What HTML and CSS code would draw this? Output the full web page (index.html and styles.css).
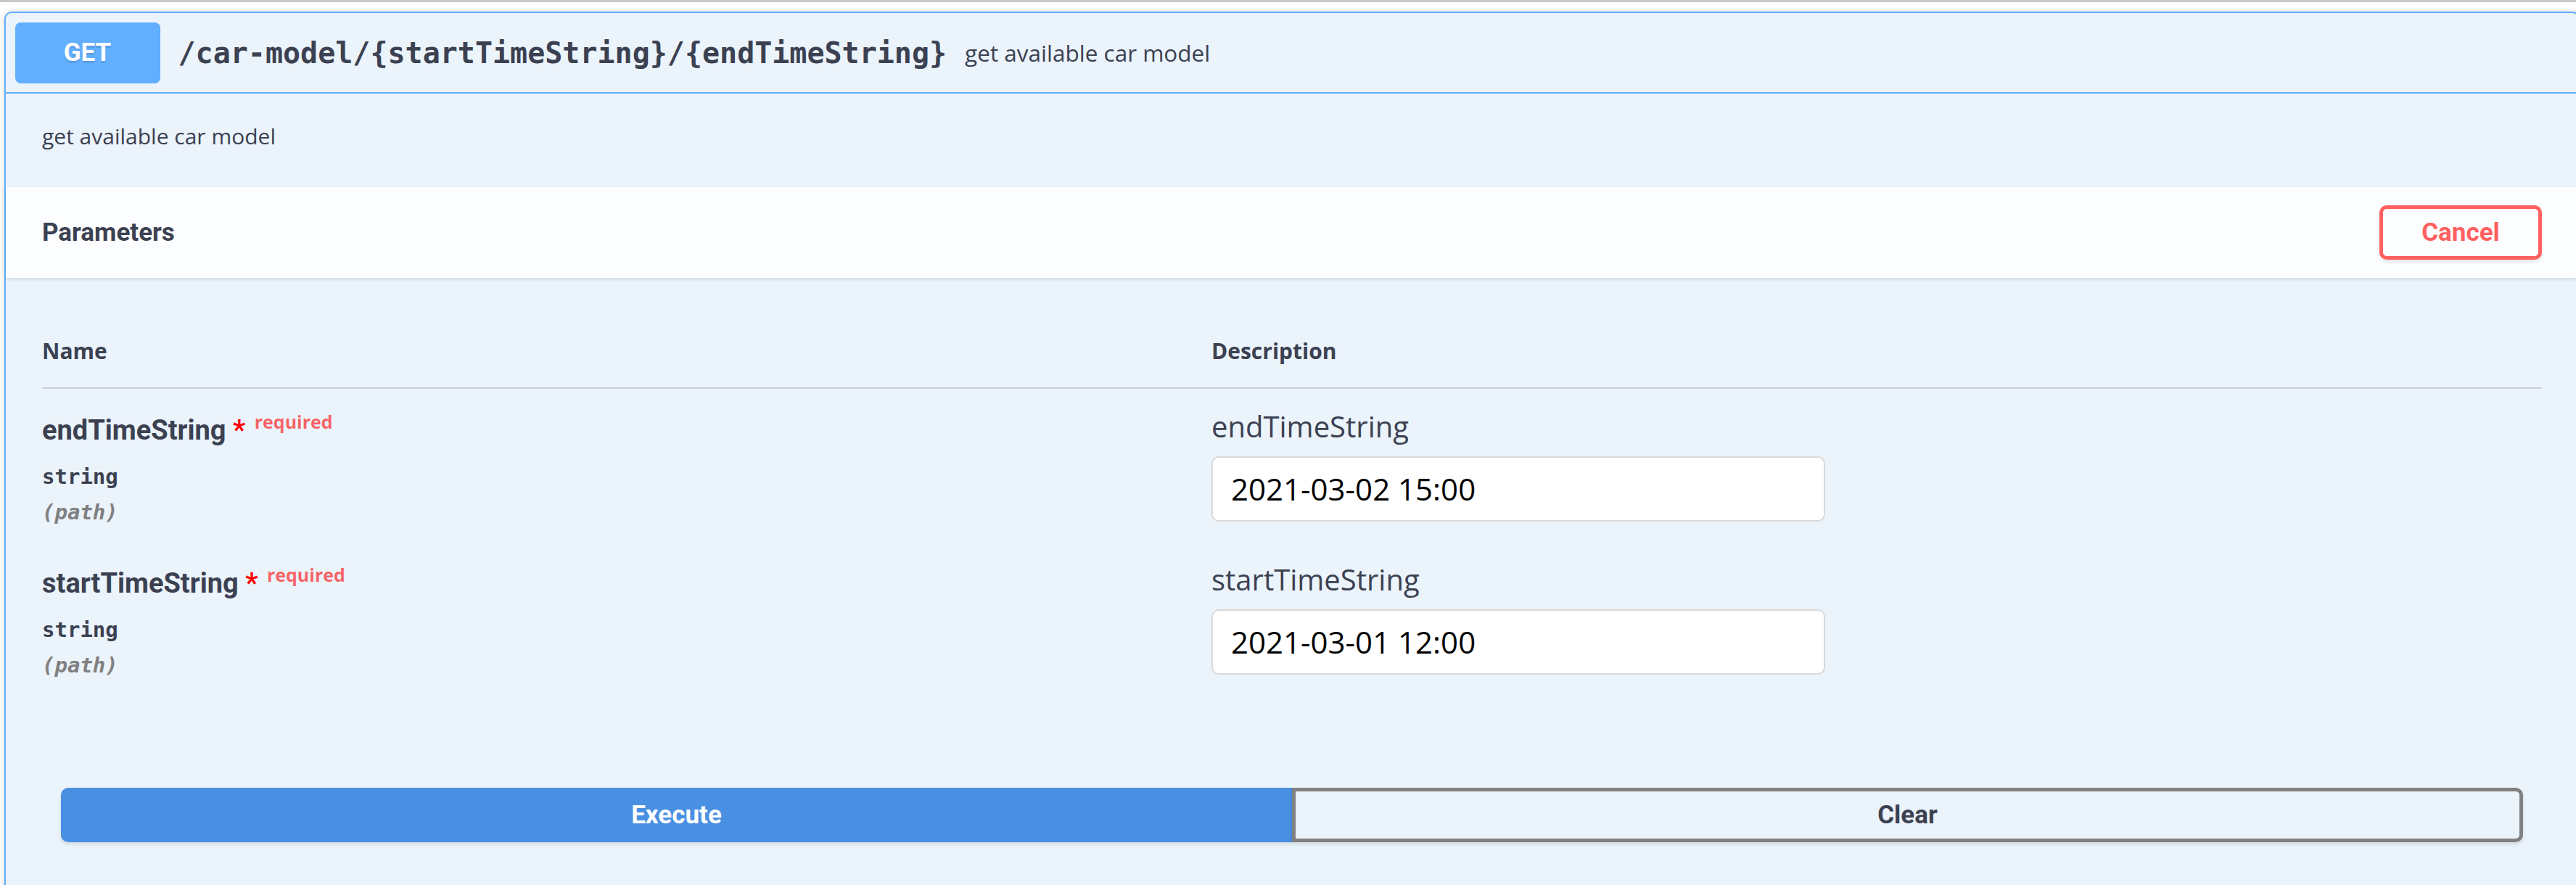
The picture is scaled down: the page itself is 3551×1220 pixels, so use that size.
FILE: index.html
```html
<!DOCTYPE html>
<html lang="en">
<head>
<meta charset="utf-8">
<title>car-model</title>
<link rel="stylesheet" href="styles.css">
</head>
<body>
<div class="topline"></div>
<div class="opblock">
  <div class="summary">
    <span class="method">GET</span>
    <span class="path">/car-model/{startTimeString}/{endTimeString}</span>
    <span class="summary-desc">get available car model</span>
  </div>
  <div class="desc-wrapper"><p>get available car model</p></div>
  <div class="section-header">
    <h4 class="section-title">Parameters</h4>
    <button class="btn cancel">Cancel</button>
  </div>
  <div class="table-container">
    <div class="params-head">
      <div class="th">Name</div>
      <div class="th">Description</div>
    </div>
    <div class="param-row">
      <div class="col-name">
        <div class="param-name">endTimeString<span class="star">&nbsp;*</span><span class="req">required</span></div>
        <div class="param-type">string</div>
        <div class="param-in">(path)</div>
      </div>
      <div class="col-desc">
        <div class="desc-label">endTimeString</div>
        <input class="text-input" type="text" value="2021-03-02 15:00">
      </div>
    </div>
    <div class="param-row">
      <div class="col-name">
        <div class="param-name">startTimeString<span class="star">&nbsp;*</span><span class="req">required</span></div>
        <div class="param-type">string</div>
        <div class="param-in">(path)</div>
      </div>
      <div class="col-desc">
        <div class="desc-label">startTimeString</div>
        <input class="text-input" type="text" value="2021-03-01 12:00">
      </div>
    </div>
  </div>
  <div class="btn-group">
    <button class="btn execute">Execute</button>
    <button class="btn clear">Clear</button>
  </div>
</div>
</body>
</html>
```
FILE: styles.css
```css
html, body {
  margin: 0;
  padding: 0;
  overflow: hidden;
  background: #ffffff;
}
body {
  font-family: "Open Sans", "Noto Sans", sans-serif;
  color: #3b4151;
}
.topline {
  height: 3px;
  background: #c6c6c6;
}
.opblock {
  margin: 13px -5px 0 6px;
  border: 2.5px solid #61affe;
  border-radius: 10px;
  background: #ebf3fb;
  box-shadow: 0 0 7.5px rgba(0, 0, 0, 0.19);
}
.summary {
  display: flex;
  align-items: center;
  padding: 12.5px;
  border-bottom: 2.5px solid #61affe;
}
.method {
  width: 200px;
  height: 84px;
  display: flex;
  align-items: center;
  justify-content: center;
  background: #61affe;
  color: #fff;
  border-radius: 7.5px;
  font-family: Roboto, "Open Sans", sans-serif;
  font-weight: 700;
  font-size: 35px;
  text-shadow: 0 2.5px 0 rgba(0, 0, 0, 0.1);
}
.path {
  padding: 0 25px;
  font-family: "DejaVu Sans Mono", "Liberation Mono", monospace;
  font-weight: 700;
  font-size: 40px;
  color: #3b4151;
}
.summary-desc {
  font-size: 31.5px;
  color: #3b4151;
}
.desc-wrapper {
  padding: 37.5px 50px;
}
.desc-wrapper p {
  margin: 0 0 12.5px;
  font-size: 30px;
  line-height: 41px;
}
.section-header {
  height: 125px;
  box-sizing: border-box;
  display: flex;
  align-items: center;
  justify-content: space-between;
  padding: 0 50px;
  background: #fcfdfe;
  box-shadow: 0 2.5px 5px rgba(0, 0, 0, 0.1);
}
.section-title {
  margin: 0;
  font-family: Roboto, "Open Sans", sans-serif;
  font-weight: 700;
  font-size: 35px;
  color: #3b4151;
}
.btn {
  height: 75px;
  box-sizing: border-box;
  border: 5px solid #808080;
  border-radius: 10px;
  background: transparent;
  font-family: Roboto, "Open Sans", sans-serif;
  font-weight: 700;
  font-size: 35px;
  color: #3b4151;
  box-shadow: 0 2.5px 5px rgba(0, 0, 0, 0.1);
  padding: 0 57.5px;
  cursor: pointer;
}
.btn.cancel {
  width: 224px;
  padding: 0;
  border-color: #ff6060;
  color: #ff6060;
}
.table-container {
  padding: 50px 50px 52px 50px;
}
.params-head {
  display: grid;
  grid-template-columns: 1612px 1fr;
  border-bottom: 2.5px solid rgba(59, 65, 81, 0.2);
}
.th {
  padding: 30px 0;
  font-size: 30px;
  line-height: 41px;
  font-weight: 700;
  color: #3b4151;
}
.param-row {
  display: grid;
  grid-template-columns: 1612px 1fr;
}
.col-name {
  padding-top: 33px;
}
.param-name {
  font-family: Roboto, "Open Sans", sans-serif;
  font-weight: 700;
  font-size: 38px;
  line-height: 48px;
  color: #3b4151;
}
.star {
  color: red;
}
.req {
  position: relative;
  top: -15px;
  padding-left: 12.5px;
  font-family: "Open Sans", sans-serif;
  font-size: 25px;
  font-weight: 700;
  color: rgba(255, 0, 0, 0.6);
}
.param-type {
  margin-top: 20.5px;
  font-family: "DejaVu Sans Mono", "Liberation Mono", monospace;
  font-weight: 700;
  font-size: 29px;
  line-height: 35px;
  color: #3b4151;
}
.param-in {
  margin-top: 14px;
  font-family: "DejaVu Sans Mono", "Liberation Mono", monospace;
  font-style: italic;
  font-weight: 700;
  font-size: 29px;
  line-height: 35px;
  color: #808080;
}
.col-desc {
  padding: 25px 0 28px;
  display: flex;
  flex-direction: column;
  align-items: flex-start;
}
.desc-label {
  font-size: 40px;
  line-height: 54px;
  color: #3b4151;
}
.text-input {
  margin-top: 14px;
  width: 846px;
  height: 90px;
  box-sizing: border-box;
  padding: 0 25px;
  border: 2.5px solid #d9d9d9;
  border-radius: 10px;
  background: #fff;
  font-family: "Open Sans", "Noto Sans", sans-serif;
  font-size: 42px;
  color: #000;
  outline: none;
}
.btn-group {
  display: flex;
  padding: 76px 76px 75px 76px;
}
.btn-group .btn {
  flex: 1 1 0;
}
.btn.execute {
  background: #4990e2;
  border-color: #4990e2;
  color: #fff;
  border-radius: 10px 0 0 10px;
}
.btn.clear {
  border-radius: 0 10px 10px 0;
}
```
